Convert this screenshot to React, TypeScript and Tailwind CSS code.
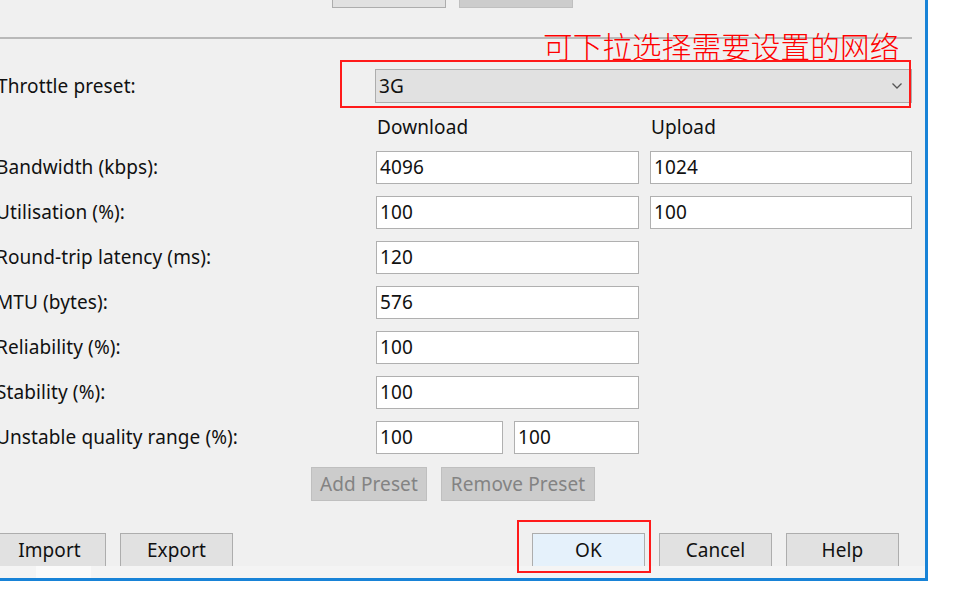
import React from 'react'

const fields: { label: string; down: string; up?: string }[] = [
  { label: 'Bandwidth (kbps):', down: '4096', up: '1024' },
  { label: 'Utilisation (%):', down: '100', up: '100' },
  { label: 'Round-trip latency (ms):', down: '120' },
  { label: 'MTU (bytes):', down: '576' },
  { label: 'Reliability (%):', down: '100' },
  { label: 'Stability (%):', down: '100' },
]

function Field({ value, className }: { value: string; className: string }) {
  return (
    <div className={`flex h-[33px] items-center border border-[#b0b0b0] bg-white pl-[3px] ${className}`}>
      {value}
    </div>
  )
}

function Btn({ label, className }: { label: string; className?: string }) {
  return (
    <div
      className={`flex h-[33px] w-[113px] items-center justify-center border-x border-t border-[#adadad] bg-[#e1e1e1] ${className ?? ''}`}
    >
      {label}
    </div>
  )
}

export default function App() {
  return (
    <div
      className="relative h-[607px] w-[958px] overflow-hidden bg-white text-[19px] tracking-[0.1px] text-[#111]"
      style={{ fontFamily: '"Noto Sans", "Noto Sans CJK SC", sans-serif' }}
    >
      <div className="relative flex w-[928px] flex-col border-r-[3px] border-b-[3px] border-[#1883d7] bg-[#f0f0f0]">
        {/* top buttons, mostly scrolled out */}
        <div className="flex h-[8px] gap-[13px] pl-[332px]">
          <div className="h-[8px] w-[114px] border-x border-b border-[#adadad] bg-[#e1e1e1]" />
          <div className="h-[8px] w-[114px] border-x border-b border-[#bfbfbf] bg-[#cccccc]" />
        </div>

        <div className="mt-[29px] h-[2px] w-[912px] bg-[#b9b9b9]" />

        {/* throttle preset */}
        <div className="mt-[30px] flex h-[34px] items-center">
          <div className="ml-[-3px] w-[378px]">Throttle preset:</div>
          <div className="flex h-[34px] w-[537px] items-center justify-between border border-[#adadad] bg-[#e1e1e1] pl-[3px] pr-[8px]">
            <span>3G</span>
            <svg width="12" height="8" viewBox="0 0 12 8" fill="none">
              <path d="M1.5 1.5 L6 6 L10.5 1.5" stroke="#555" strokeWidth="1.3" />
            </svg>
          </div>
        </div>

        <div className="mt-[12px] flex h-[24px] items-center">
          <div className="w-[377px]" />
          <div className="w-[274px]">Download</div>
          <div>Upload</div>
        </div>

        <div className="mt-[12px] flex flex-col gap-[12px]">
          {fields.map((f) => (
            <div key={f.label} className="flex items-center">
              <div className="ml-[-4px] w-[380px]">{f.label}</div>
              <Field value={f.down} className="w-[263px]" />
              {f.up && <Field value={f.up} className="ml-[11px] w-[262px]" />}
            </div>
          ))}
          <div className="flex items-center">
            <div className="ml-[-4px] w-[380px]">Unstable quality range (%):</div>
            <Field value="100" className="w-[127px]" />
            <Field value="100" className="ml-[11px] w-[125px]" />
          </div>
        </div>

        <div className="mt-[13px] flex h-[34px] gap-[14px] pl-[311px] text-[#838383]">
          <div className="flex w-[116px] items-center justify-center border border-[#bfbfbf] bg-[#cccccc]">Add Preset</div>
          <div className="flex w-[154px] items-center justify-center border border-[#bfbfbf] bg-[#cccccc]">Remove Preset</div>
        </div>

        <div className="mt-[32px] flex">
          <Btn label="Import" className="ml-[-7px]" />
          <Btn label="Export" className="ml-[14px]" />
          <Btn label="OK" className="ml-[299px] border-[#0078d7] bg-[#e5f1fb]" />
          <Btn label="Cancel" className="ml-[14px]" />
          <Btn label="Help" className="ml-[14px]" />
        </div>

        <div className="flex h-[12px] bg-[#f4f4f4]">
          <div className="ml-[36px] w-[55px] bg-[#fafafa]" />
        </div>

        {/* annotations */}
        <div
          className="absolute left-[543px] top-[29px] text-[29.6px] leading-[34px] font-light text-[#ff0000]"
          style={{ fontFamily: '"Noto Sans CJK SC", sans-serif' }}
        >
          可下拉选择需要设置的网络
        </div>
        <div className="absolute left-[340px] top-[60px] h-[48px] w-[571px] border-2 border-[#ff1a1a]" />
        <div className="absolute left-[517px] top-[520px] h-[53px] w-[134px] border-2 border-[#ff1a1a]" />
      </div>
    </div>
  )
}
